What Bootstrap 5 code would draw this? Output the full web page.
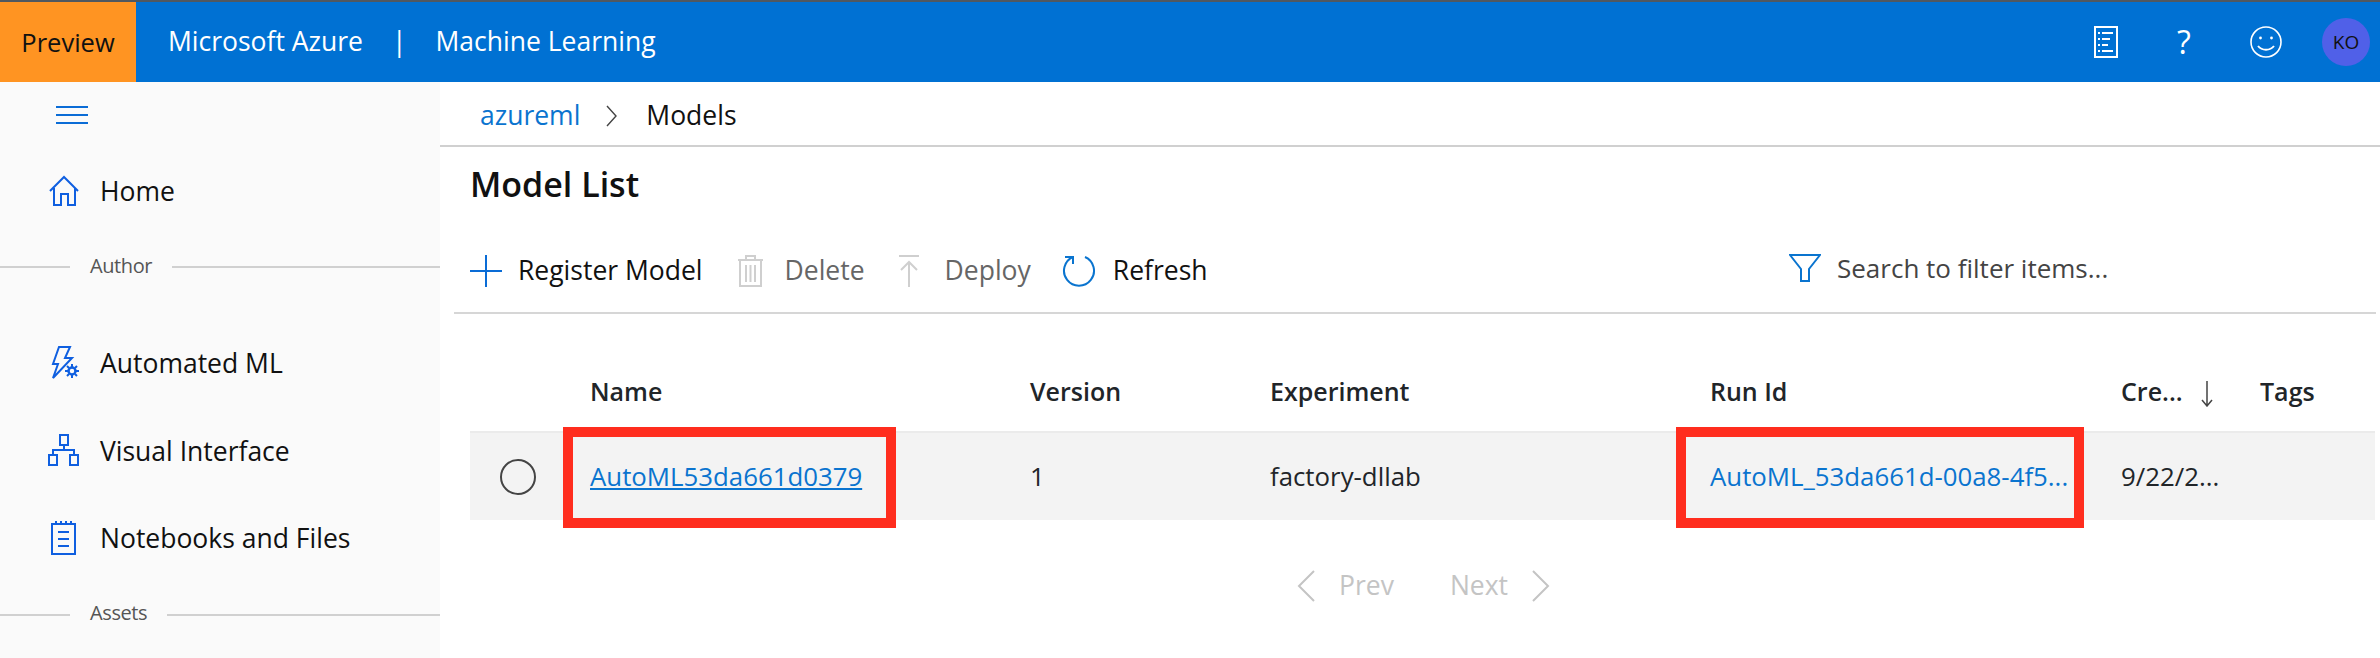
<!DOCTYPE html>
<html lang="en">
<head>
    <meta charset="UTF-8">
    <meta name="viewport" content="width=device-width, initial-scale=1.0">
    <title>Model List - Machine Learning</title>
    <link href="https://cdn.jsdelivr.net/npm/bootstrap@5.3.3/dist/css/bootstrap.min.css" rel="stylesheet">
    <script src="https://cdn.jsdelivr.net/npm/bootstrap@5.3.3/dist/js/bootstrap.bundle.min.js"></script>
    <style>
        html, body {
            height: 100%;
            overflow: hidden;
        }
        body {
            font-family: "Open Sans", "Liberation Sans", sans-serif;
            font-size: 26.5px;
            color: #111;
            background-color: #fff;
        }
        a {
            color: #0a74cf;
        }
        .app-shell {
            height: 658px;
        }
        .top-bar {
            height: 82px;
            background-color: #0071d3;
            border-top: 2px solid #505860;
            color: #fff;
        }
        .preview-tag {
            width: 136px;
            background-color: #ff9422;
            color: #111;
            font-size: 25.5px;
        }
        .brand-text {
            margin-left: 32px;
        }
        .brand-sep {
            margin: 0 29px;
        }
        .top-icons {
            padding-right: 10px;
        }
        .top-icon {
            width: 32px;
            height: 32px;
        }
        .help-mark {
            width: 32px;
            margin: 0 50px;
            text-align: center;
            font-size: 32px;
        }
        .avatar {
            width: 48px;
            height: 48px;
            margin-left: 40px;
            background-color: #5060e8;
            color: #111;
            font-size: 19px;
        }
        .side-nav {
            width: 440px;
            background-color: #fafafa;
        }
        .side-toggle {
            height: 65px;
            padding-left: 56px;
        }
        .side-item {
            height: 87.5px;
            padding-left: 48px;
        }
        .side-item span {
            padding-top: 3px;
        }
        .side-home {
            height: 88px;
        }
        .side-home span {
            padding-top: 1px;
        }
        .side-ico {
            width: 32px;
            height: 34px;
            margin-right: 20px;
        }
        .side-label {
            height: 64px;
            color: #555;
            font-size: 20px;
            letter-spacing: -0.4px;
        }
        .side-label span {
            padding-bottom: 3px;
        }
        .side-label::before {
            content: "";
            width: 70px;
            height: 2px;
            margin-right: 20px;
            background-color: #d0d0d0;
        }
        .side-label::after {
            content: "";
            flex-grow: 1;
            height: 2px;
            margin-left: 20px;
            background-color: #d0d0d0;
        }
        .side-author {
            margin-bottom: 20px;
        }
        .side-assets {
            margin-top: 1px;
        }
        .crumbs {
            height: 65px;
            padding: 5px 0 0 40px;
            border-bottom: 2px solid #d0d0d0;
        }
        .crumb-sep {
            margin: 0 29px 0 26px;
        }
        .page-title {
            margin: 0;
            padding: 17px 0 0 30px;
            height: 72px;
            font-size: 34px;
            font-weight: 600;
            font-family: inherit;
        }
        .tool-row {
            height: 95px;
            margin: 0 4px 0 14px;
            padding: 11px 0 0 16px;
            border-bottom: 2px solid #d6d6d6;
        }
        .tool-btn {
            margin-right: 34px;
        }
        .tool-plus {
            margin-right: 16px;
        }
        .tool-trash {
            margin-right: 21px;
        }
        .tool-up {
            margin-right: 26px;
        }
        .tool-deploy {
            margin-right: 31px;
        }
        .tool-spin {
            margin-right: 17px;
        }
        .tool-off {
            color: #666;
        }
        .search-hint {
            position: relative;
            top: -3px;
            width: 587px;
            color: #444;
            font-size: 26px;
        }
        .search-hint svg {
            margin-right: 16px;
        }
        .model-grid {
            table-layout: fixed;
            width: 1905px;
            margin: 58px 0 0 30px;
        }
        .model-grid th, .model-grid td {
            padding: 0;
            border: 0;
            vertical-align: middle;
            white-space: nowrap;
        }
        .model-grid th {
            height: 60px;
            padding-bottom: 20px;
            font-weight: 600;
            font-size: 25px;
            background: none;
        }
        .model-grid td {
            height: 88px;
            font-size: 25.8px;
            background-color: #f3f3f3;
            border-top: 2px solid #ebebeb;
        }
        .pick-ring {
            width: 36px;
            height: 36px;
            margin-left: 30px;
            border: 2px solid #444;
            border-radius: 50%;
        }
        .mark-box {
            position: absolute;
            top: -6px;
            bottom: -8px;
            border: 10px solid #ff2d1e;
            pointer-events: none;
        }
        .mark-name {
            left: -27px;
            width: 333px;
        }
        .mark-run {
            left: -34px;
            width: 408px;
        }
        .run-link {
            text-decoration: none;
        }
        .sort-arrow {
            margin-left: 18px;
        }
        .pager {
            margin-top: 46px;
            padding-left: 857px;
            color: #c4c4c4;
        }
        .pager-gap {
            width: 56px;
        }
    </style>
</head>
<body>
<div class="app-shell d-flex flex-column">
    <header class="top-bar d-flex align-items-stretch">
        <div class="preview-tag d-flex align-items-center justify-content-center">Preview</div>
        <div class="d-flex align-items-center flex-grow-1">
            <span class="brand-text">Microsoft Azure</span>
            <span class="brand-sep">|</span>
            <span>Machine Learning</span>
        </div>
        <div class="top-icons d-flex align-items-center">
            <svg width="24" height="32" viewBox="0 0 24 32" fill="none" stroke="#fff" stroke-width="2"><rect x="1" y="1" width="22" height="30"/><path d="M8 7h11M8 13h8M8 19h6M8 25h11M4 7h2M4 13h2M4 19h2M4 25h2"/></svg>
            <span class="help-mark">?</span>
            <svg class="top-icon" viewBox="0 0 32 32" fill="none" stroke="#fff" stroke-width="1.6"><circle cx="16" cy="16" r="15"/><path d="M8 20c4 5 12 5 16 0" stroke-width="2"/><circle cx="10.5" cy="12" r="1.4" fill="#fff" stroke="none"/><circle cx="21.5" cy="12" r="1.4" fill="#fff" stroke="none"/></svg>
            <div class="avatar rounded-circle d-flex align-items-center justify-content-center">KO</div>
        </div>
    </header>

    <div class="d-flex flex-grow-1">
        <nav class="side-nav flex-shrink-0">
            <div class="side-toggle d-flex align-items-center">
                <svg width="32" height="18" viewBox="0 0 32 18" stroke="#0a6cd6" stroke-width="2"><path d="M0 1h32M0 9h32M0 17h32"/></svg>
            </div>
            <div class="side-item side-home d-flex align-items-center">
                <svg class="side-ico" viewBox="0 0 32 34" fill="none" stroke="#0f5fe0" stroke-width="2"><path d="M2 17 16 3l14 14M6 14v17h7V20h7v11h7V14"/></svg>
                <span>Home</span>
            </div>
            <div class="side-label side-author d-flex align-items-center"><span>Author</span></div>
            <div class="side-item d-flex align-items-center">
                <svg class="side-ico" viewBox="0 0 32 34" fill="none" stroke="#0f5fe0" stroke-width="2"><path d="M11 1h11l-5 11h7L5 32l5-14H5z"/><circle cx="24" cy="25" r="3.5" stroke-width="2.5"/><path d="M24 18v3M24 29v3M17 25h3M28 25h3M19 20l2 2M27 28l2 2M29 20l-2 2M21 28l-2 2" stroke-width="2"/></svg>
                <span>Automated ML</span>
            </div>
            <div class="side-item d-flex align-items-center">
                <svg class="side-ico" viewBox="0 0 32 34" fill="none" stroke="#0f5fe0" stroke-width="2"><rect x="12" y="2" width="8" height="10"/><rect x="1" y="22" width="8" height="10"/><rect x="22" y="22" width="8" height="10"/><path d="M16 12v5M5 22v-5h21v5"/></svg>
                <span>Visual Interface</span>
            </div>
            <div class="side-item d-flex align-items-center">
                <svg class="side-ico" viewBox="0 0 32 34" fill="none" stroke="#0f5fe0" stroke-width="2"><rect x="4" y="3" width="23" height="30"/><path d="M8 0v3M13 0v3M18 0v3M23 0v3M10 11h11M10 18h11M10 25h11"/></svg>
                <span>Notebooks and Files</span>
            </div>
            <div class="side-label side-assets d-flex align-items-center"><span>Assets</span></div>
        </nav>

        <main class="flex-grow-1">
            <div class="crumbs d-flex align-items-center">
                <a class="text-decoration-none" href="#">azureml</a>
                <svg class="crumb-sep" width="11" height="22" viewBox="0 0 11 22" fill="none" stroke="#444" stroke-width="1.4"><path d="M1 1l9 10-9 10"/></svg>
                <span>Models</span>
            </div>
            <h1 class="page-title">Model List</h1>
            <div class="tool-row d-flex align-items-center justify-content-between">
                <div class="d-flex align-items-center">
                    <div class="tool-btn d-flex align-items-center">
                        <svg class="tool-plus" width="32" height="32" viewBox="0 0 32 32" stroke="#0a6cd6" stroke-width="2"><path d="M0 16h32M16 0v32"/></svg>
                        <span>Register Model</span>
                    </div>
                    <div class="tool-btn tool-off d-flex align-items-center">
                        <svg class="tool-trash" width="27" height="32" viewBox="0 0 27 32" fill="none" stroke="#cfcfcf" stroke-width="2"><path d="M1 5h25M9 5V1h9v4M3 5v26h21V5M9 10v17M13.500 10v17M18 10v17"/></svg>
                        <span>Delete</span>
                    </div>
                    <div class="tool-deploy tool-off d-flex align-items-center">
                        <svg class="tool-up" width="20" height="32" viewBox="0 0 20 32" fill="none" stroke="#cfcfcf" stroke-width="2"><path d="M0 1h20M10 32V7M2 15l8-8 8 8"/></svg>
                        <span>Deploy</span>
                    </div>
                    <div class="d-flex align-items-center">
                        <svg class="tool-spin" width="34" height="34" viewBox="0 0 34 34" fill="none" stroke="#0a74cf" stroke-width="2"><path d="M23 3a15 15 0 1 1-12 0M11 10V3H3"/></svg>
                        <span>Refresh</span>
                    </div>
                </div>
                <div class="search-hint d-flex align-items-center">
                    <svg width="32" height="28" viewBox="0 0 32 28" fill="none" stroke="#0a74cf" stroke-width="2"><path d="M1 1h30L20 15v12h-8V15z"/></svg>
                    <span>Search to filter items...</span>
                </div>
            </div>

            <table class="table model-grid mb-0">
                <colgroup>
                    <col style="width:120px">
                    <col style="width:440px">
                    <col style="width:240px">
                    <col style="width:440px">
                    <col style="width:411px">
                    <col style="width:139px">
                    <col style="width:115px">
                </colgroup>
                <thead>
                    <tr>
                        <th></th>
                        <th>Name</th>
                        <th>Version</th>
                        <th>Experiment</th>
                        <th>Run Id</th>
                        <th>Cre...<svg class="sort-arrow" width="12" height="26" viewBox="0 0 12 26" fill="none" stroke="#444" stroke-width="1.5"><path d="M6 0v25M1 19l5 6 5-6"/></svg></th>
                        <th>Tags</th>
                    </tr>
                </thead>
                <tbody>
                    <tr>
                        <td><div class="pick-ring"></div></td>
                        <td class="position-relative"><a href="#">AutoML53da661d0379</a><span class="mark-box mark-name"></span></td>
                        <td>1</td>
                        <td>factory-dllab</td>
                        <td class="position-relative"><a class="run-link" href="#">AutoML_53da661d-00a8-4f5...</a><span class="mark-box mark-run"></span></td>
                        <td>9/22/2...</td>
                        <td></td>
                    </tr>
                </tbody>
            </table>

            <div class="pager d-flex align-items-center">
                <svg width="18" height="32" viewBox="0 0 18 32" fill="none" stroke="#c4c4c4" stroke-width="2"><path d="M17 1 2 16l15 15"/></svg>
                <span class="ms-4">Prev</span>
                <span class="pager-gap"></span>
                <span>Next</span>
                <svg class="ms-4" width="18" height="32" viewBox="0 0 18 32" fill="none" stroke="#c4c4c4" stroke-width="2"><path d="M1 1l15 15L1 31"/></svg>
            </div>
        </main>
    </div>
</div>
</body>
</html>
